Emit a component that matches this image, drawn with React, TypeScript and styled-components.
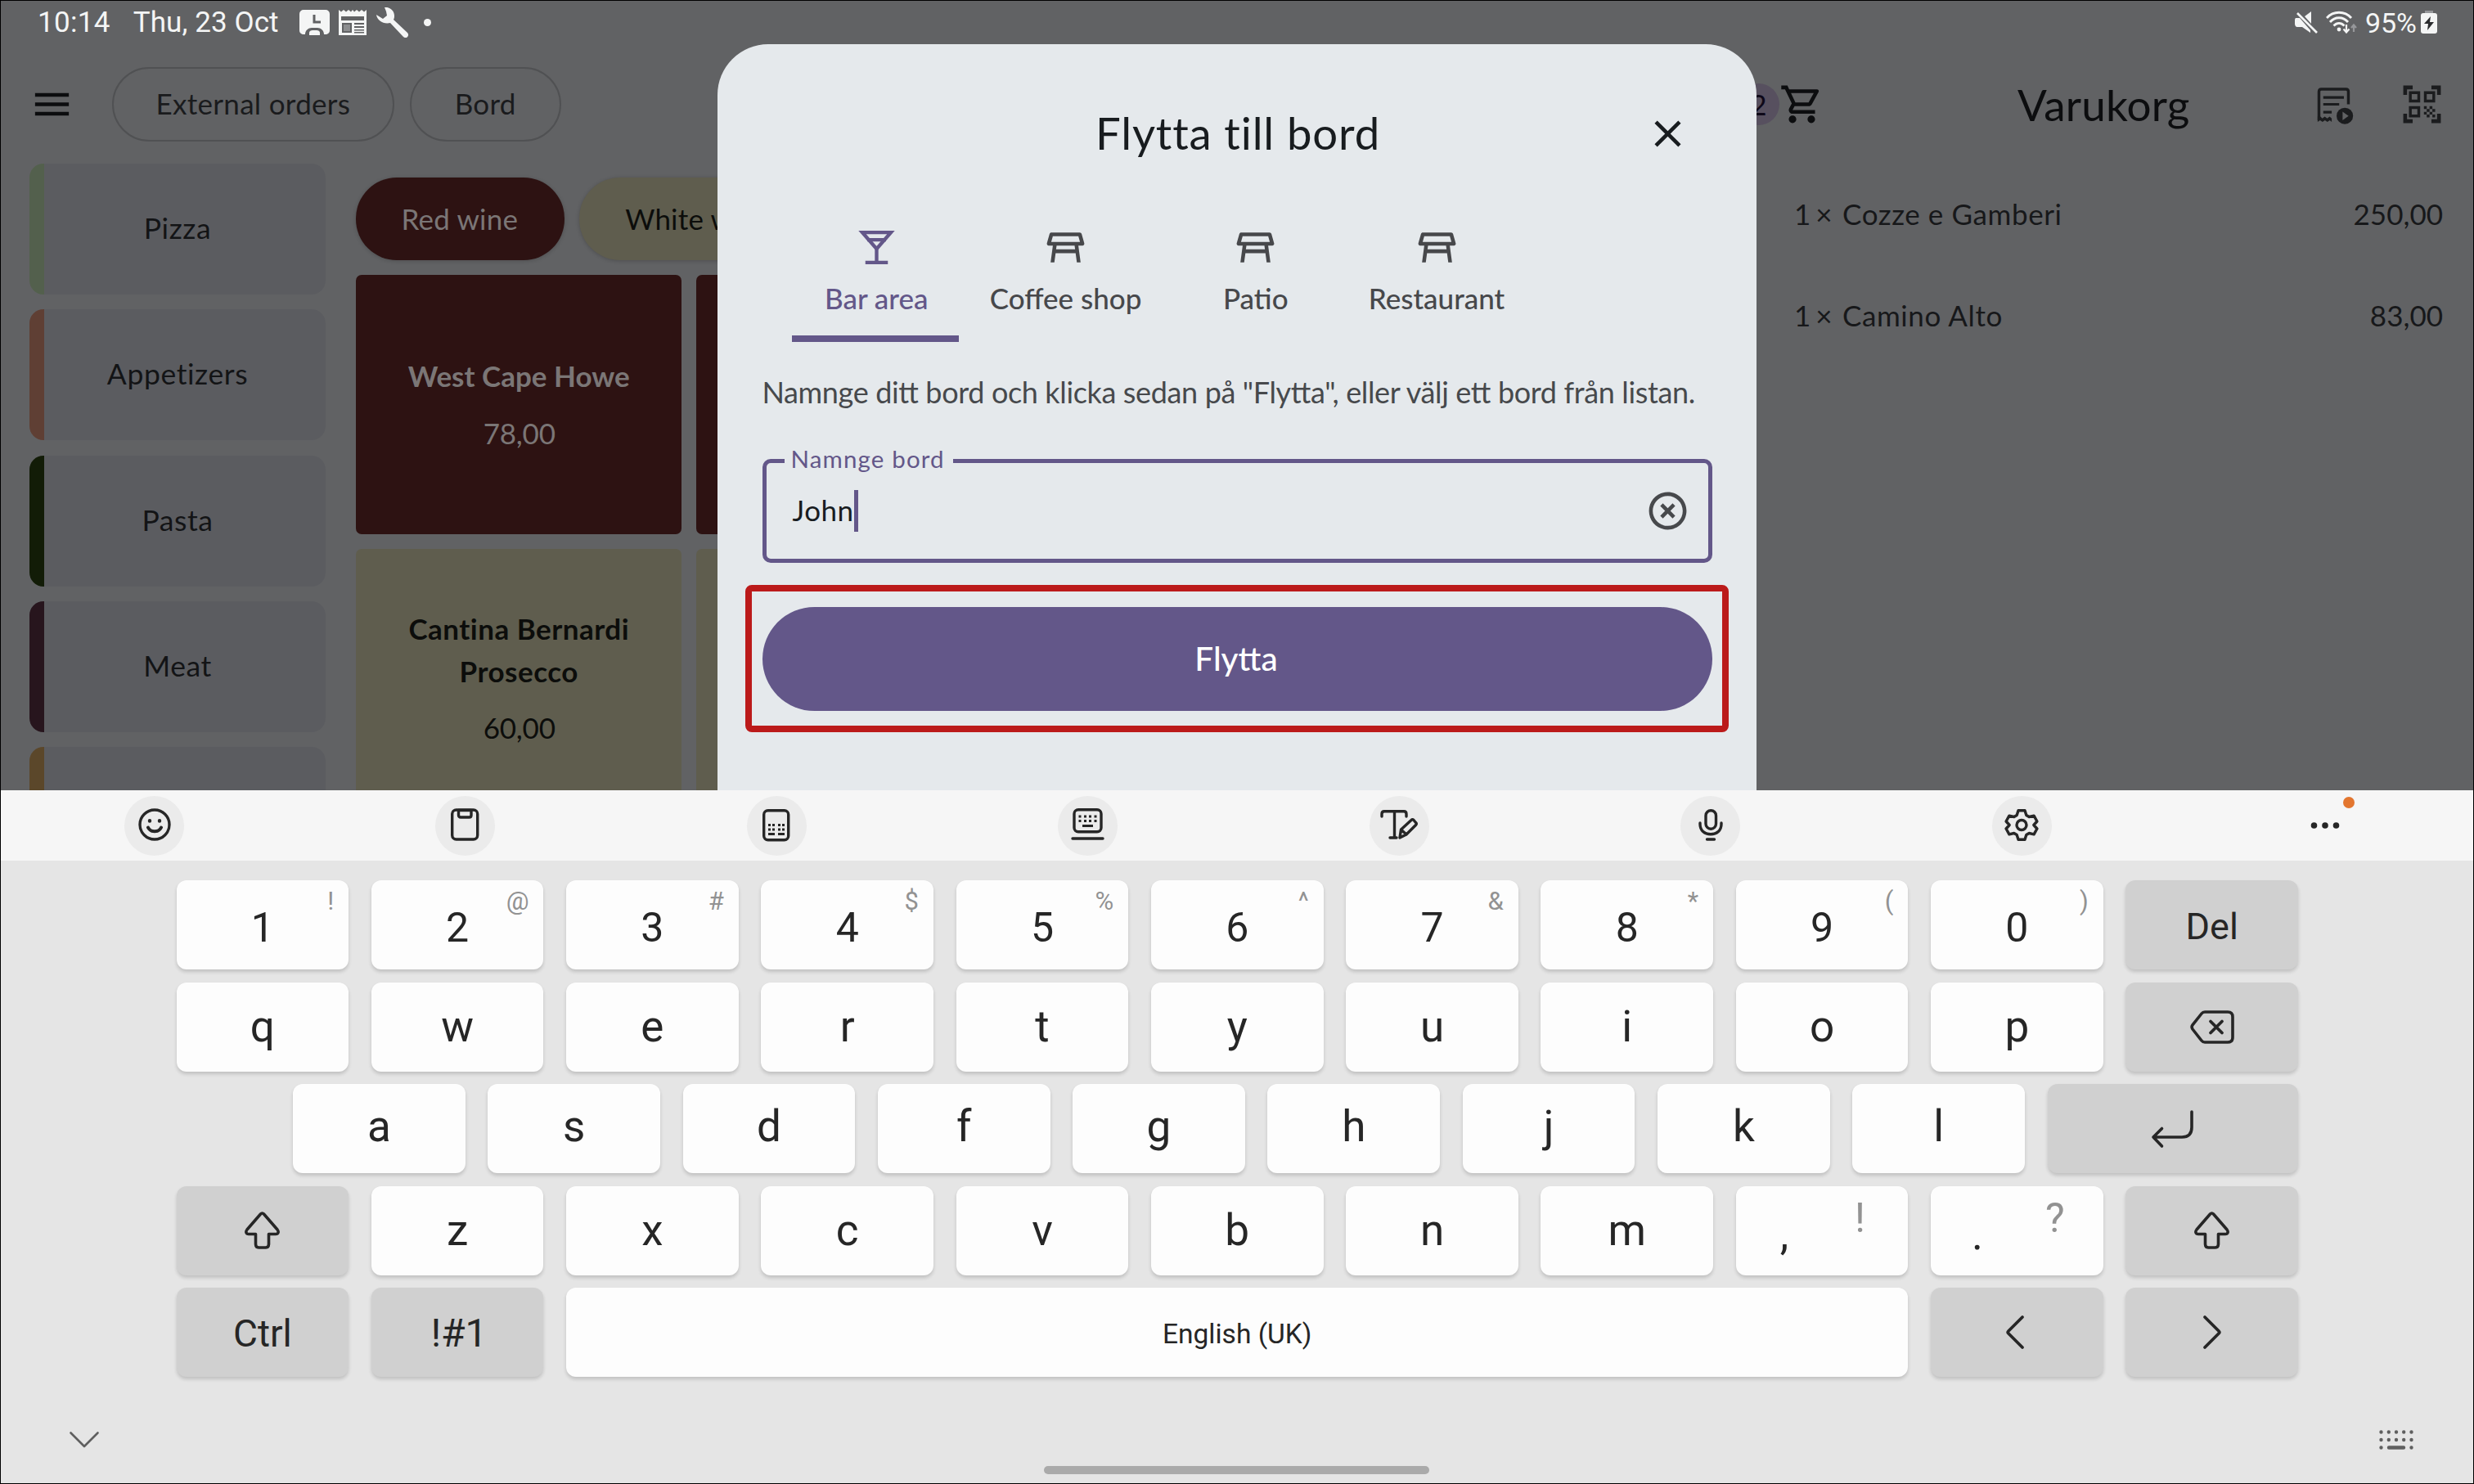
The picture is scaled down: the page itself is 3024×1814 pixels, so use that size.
import React from 'react';
import styled, {createGlobalStyle} from "styled-components";
import {
    MdClose,
    MdHighlightOff,
    MdMenu,
    MdOutlineShoppingCart,
    MdOutlineTableRestaurant,
    MdQrCodeScanner
} from "react-icons/md";

type KeyData = {
    label?: React.ReactNode
    hint?: string
    gray?: boolean
    grow?: boolean
    size?: number
    shift?: number
    punct?: number
}

const categories = [
    {title: 'Pizza', color: '#53604d'},
    {title: 'Appetizers', color: '#5f3f34'},
    {title: 'Pasta', color: '#121c07'},
    {title: 'Meat', color: '#27151d'},
    {title: '', color: '#5b472a'},
]

const cart = [
    {name: 'Cozze e Gamberi', price: '250,00'},
    {name: 'Camino Alto', price: '83,00'},
]

/* status bar icons */

const ContactIcon = () => (
    <svg width="37" height="31" viewBox="0 0 37 31">
        <path fill="#f4f5f5" d="M5 0h27a5 5 0 0 1 5 5v20a5 5 0 0 1-4 5h-3c0-5-4-8-8-8h-7c-4 0-8 3-8 8H4a5 5 0 0 1-4-5V5a5 5 0 0 1 5-5z"/>
        <path fill="none" stroke="#616264" strokeWidth="3" d="M18 6v9h8"/>
        <path fill="#f4f5f5" d="M12 31v-3c0-2 2-3 4-3h5c2 0 4 1 4 3v3z"/>
    </svg>
)

const NewsIcon = () => (
    <svg width="34" height="31" viewBox="0 0 34 31">
        <path fill="#f4f5f5" d="M0 0l3 2.500 3-2.500 3 2.500 3-2.500 3 2.500 2-2.500 2 2.500 3-2.500 3 2.500 3-2.500 3 2.500 3-2.500v31H0z"/>
        <path fill="#616264" d="M3 8h28v5H3zM4 16h12v12H4zM19 16h12v2H19zM19 20h12v2H19zM19 24h12v1.500H19zM19 27h12v1.500H19z"/>
        <path fill="#8d8e90" d="M6 18h8v8H6z"/>
    </svg>
)

const WrenchIcon = () => (
    <svg width="40" height="37" viewBox="0 0 40 37">
        <path fill="#f4f5f5" d="M10 0c6-1 12 4 12 10 0 2 0 3-1 5l17 16c2 2 1 5-1 6-2 0-3 0-4-1L17 19c-8 2-16-3-17-10l8 5 5-4-1-5z"/>
    </svg>
)

const MuteIcon = () => (
    <svg width="28" height="27" viewBox="0 0 28 27">
        <path fill="#f4f5f5" d="M1 8h5l13 15v3L9 19H3c-2 0-3-2-3-4v-4c0-1 0-2 1-3zM12 6l8-6v15z"/>
        <path stroke="#f4f5f5" strokeWidth="2.600" d="M3 2l24 24"/>
    </svg>
)

const WifiIcon = () => (
    <svg width="38" height="28" viewBox="0 0 38 28">
        <g fill="none" stroke="#f4f5f5" strokeWidth="2.800">
            <path d="M1 9c8-9 22-9 30 0"/>
            <path d="M5 14c6-7 16-7 22 0"/>
            <path d="M9.500 18.500c4-4 9-4 13 0"/>
            <path strokeWidth="2.200" d="M25 17v9M21.500 22.500l3.500 4 3.500-4"/>
        </g>
        <circle cx="16" cy="23" r="2.400" fill="#f4f5f5"/>
        <path fill="none" stroke="#96979a" strokeWidth="2.200" d="M34 26v-8M31 21l3-3.500 3 3.500"/>
    </svg>
)

const BatteryIcon = () => (
    <svg width="20" height="28" viewBox="0 0 20 28">
        <path fill="#96979a" d="M5 0h10v4H5z"/>
        <rect y="3" width="20" height="25" rx="3" fill="#f4f5f5"/>
        <path fill="#2b2c2e" d="M12 7l-8 9h5l-1 8 8-10h-5z"/>
    </svg>
)

/* app icons */

const ReceiptIcon = () => (
    <svg width="55" height="55" viewBox="0 0 24 24" fill="none" stroke="#1b1c1e">
        <path strokeWidth="1.500" d="M19.400 12V5.200c0-.8-.5-1.300-1.300-1.300H5c-.8 0-1.300.5-1.300 1.300V20.500"/>
        <path strokeWidth="1.400" d="M6 8.300h11M6 12h8.500M6 16.200h4.500"/>
        <path fill="#1b1c1e" stroke="none" d="M3 18.500h1.500l1 1 1.300-1 1.300 1 1.300-1 1.100 1v1.900l-1-.9-1.300.9-1.300-.9-1.300.9-1.300-.9-1.300.9z"/>
        <circle cx="17.500" cy="18.200" r="4.400" fill="#1b1c1e" stroke="none"/>
        <path fill="#616264" stroke="none" d="M16.300 15.900l3.200 2.300-3.200 2.300z"/>
    </svg>
)

const MartiniIcon = () => (
    <svg width="55" height="55" viewBox="0 0 24 24" fill="none" stroke="#635789" strokeWidth="1.900">
        <path d="M4.400 4h15.200L12 12.700z"/>
        <path d="M7 7.900h10M12 12.700V20M6 20h12"/>
    </svg>
)

/* keyboard icons */

const StrokeSvg = styled.svg`
    display: block;
    fill: none;
    stroke: #262626;
    stroke-width: 3.4px;
    stroke-linecap: round;
    stroke-linejoin: round;
    overflow: visible;
`

const SmileIcon = () => (
    <StrokeSvg width="40" height="40" viewBox="0 0 40 40">
        <circle cx="20" cy="20" r="18"/>
        <path strokeWidth="4" d="M12 23.500c1.500 3.200 4.500 4.700 8 4.700s6.500-1.500 8-4.700"/>
        <path strokeWidth="4.400" d="M14 15.300v.2M26 15.300v.2"/>
    </StrokeSvg>
)

const ClipboardIcon = () => (
    <StrokeSvg width="35" height="40" viewBox="0 0 35 40">
        <rect x="1.700" y="2" width="31" height="36" rx="5"/>
        <path d="M9.500 2.500v6c0 1.500 1 2.500 2.500 2.500h10.500c1.500 0 2.500-1 2.500-2.500v-6z"/>
    </StrokeSvg>
)

const CalculatorIcon = () => (
    <StrokeSvg width="34" height="39" viewBox="0 0 34 39">
        <rect x="1.700" y="1.700" width="30" height="36" rx="5"/>
        <path strokeWidth="3" strokeLinecap="butt" d="M7 19.500h3M12 19.500h3M19 19.500h3M24 19.500h3M7 25h3M12 25h3M19 25h3M24 25h3M7 30.500h8M19 30.500h8"/>
    </StrokeSvg>
)

const KeyboardIcon = () => (
    <StrokeSvg width="41" height="40" viewBox="0 0 41 40">
        <rect x="4" y="1.700" width="33" height="27" rx="5"/>
        <path strokeWidth="3" strokeLinecap="butt" d="M9.500 10h3M16 10h3M22 10h3M28.500 10h3M9.500 15.500h3M16 15.500h3M22 15.500h3M28.500 15.500h3M14 21.500h13"/>
        <path d="M2 37h37"/>
    </StrokeSvg>
)

const TextEditIcon = () => (
    <StrokeSvg width="46" height="36" viewBox="0 0 46 36">
        <path d="M2 8V5c0-2 1-3.300 3-3.300h24c2 0 3 1.300 3 3.300v3M17.500 2v31M12 34h8"/>
        <path d="M24 34l1.500-10L38 12.500c1-1 2-1 3 0l2.500 3c1 1 1 2 0 3L32 30zM26 24.500l6 5.500"/>
    </StrokeSvg>
)

const MicIcon = () => (
    <StrokeSvg width="30" height="39" viewBox="0 0 30 39">
        <rect x="9" y="1.700" width="12.500" height="22.500" rx="6.200"/>
        <path d="M2 17v1.500c0 7.500 5.500 12.300 13 12.300s13-4.800 13-12.300V17M10.500 37h9"/>
    </StrokeSvg>
)

const GearIcon = () => (
    <StrokeSvg width="40" height="39" viewBox="0 0 40 39">
        <circle cx="20" cy="19.500" r="6"/>
        <path d="M16 1.800h8l1.800 5.700 3.400 2 5.900-1.300 3.800 6.800-4 4.500 4 4.500-3.800 6.800-5.900-1.300-3.400 2-1.800 5.700h-8l-1.800-5.700-3.400-2-5.900 1.300-3.800-6.800 4-4.500-4-4.500 3.800-6.800 5.900 1.300 3.400-2z"/>
    </StrokeSvg>
)

const DotsIcon = () => (
    <StrokeSvg width="36" height="8" viewBox="0 0 36 8">
        <path strokeWidth="7.600" d="M4.500 4v.01M18 4v.01M31.500 4v.01"/>
    </StrokeSvg>
)

const BackspaceIcon = () => (
    <StrokeSvg width="54" height="41" viewBox="0 0 54 41">
        <path strokeWidth="3.600" d="M18 2h28c4 0 6 2 6 6v25c0 4-2 6-6 6H18c-2 0-3-.7-4-2L3 23c-1.300-2-1.300-3.500 0-5.200L14 4c1-1.300 2-2 4-2z"/>
        <path strokeWidth="3.800" d="M25 13.500l14 14M39 13.500l-14 14"/>
    </StrokeSvg>
)

const EnterIcon = () => (
    <StrokeSvg width="51" height="46" viewBox="0 0 51 46">
        <path strokeWidth="3.600" d="M49 2v19c0 8-4 12-12 12H2M12.500 22.500L2 33l10.500 11"/>
    </StrokeSvg>
)

const ShiftIcon = () => (
    <StrokeSvg width="43" height="46" viewBox="0 0 43 46">
        <path strokeWidth="3.600" d="M19.500 3L3 22c-2 2.500-1.300 5.500 2 5.500h8.500V40c0 2.500 1.300 4 4 4h8c2.700 0 4-1.500 4-4V27.500H38c3.300 0 4-3 2-5.500L23.500 3c-1.300-1.400-2.700-1.400-4 0z"/>
    </StrokeSvg>
)

const LeftIcon = () => (
    <StrokeSvg width="26" height="41" viewBox="0 0 26 41">
        <path strokeWidth="3.800" d="M20 2L3 19c-1 1-1 2 0 3l17 17"/>
    </StrokeSvg>
)

const RightIcon = () => (
    <StrokeSvg width="22" height="41" viewBox="0 0 22 41">
        <path strokeWidth="3.800" d="M2 2l17 17c1 1 1 2 0 3L2 39"/>
    </StrokeSvg>
)

const HideIcon = () => (
    <StrokeSvg width="36" height="20" viewBox="0 0 36 20">
        <path stroke="#5f5f5f" strokeWidth="2.600" d="M1.500 1.500L18 18 34.500 1.500"/>
    </StrokeSvg>
)

const SwitchKeyboardIcon = () => (
    <StrokeSvg width="42" height="24" viewBox="0 0 42 24">
        <path stroke="#5f5f5f" strokeWidth="4.400" d="M2.500 2.500v.01M11.800 2.500v.01M21 2.500v.01M30.200 2.500v.01M39.500 2.500v.01M2.500 12v.01M11.800 12v.01M21 12v.01M30.200 12v.01M39.500 12v.01M2.500 21.500v.01M12 21.500h18M39.500 21.500v.01"/>
    </StrokeSvg>
)

const letters = (text: string, shift = 0): KeyData[] => text.split('').map(l => ({label: l, shift}))

const keyRows: { indent?: boolean, keys: KeyData[] }[] = [
    {
        keys: [
            ...'1234567890'.split('').map((d, i) => ({label: d, hint: '!@#$%^&*()'[i], size: 50, shift: 6})),
            {label: 'Del', gray: true, size: 45, shift: 3},
        ]
    },
    {keys: [...letters('qwertyuiop'), {label: <BackspaceIcon/>, gray: true}]},
    {indent: true, keys: [...letters('asdfghjkl', -4), {label: <EnterIcon/>, gray: true, grow: true}]},
    {
        keys: [
            {label: <ShiftIcon/>, gray: true},
            ...letters('zxcvbnm'),
            {label: ',', hint: '!', punct: 54, shift: 10},
            {label: '.', hint: '?', punct: 50, shift: 10},
            {label: <ShiftIcon/>, gray: true},
        ]
    },
    {
        keys: [
            {label: 'Ctrl', gray: true, size: 46, shift: 2},
            {label: <SymbolsLabel/>, gray: true, size: 48, shift: 2},
            {label: 'English (UK)', grow: true, size: 33.500, shift: 4},
            {label: <LeftIcon/>, gray: true},
            {label: <RightIcon/>, gray: true},
        ]
    },
]

function SymbolsLabel() {
    return <Symbols>!#1</Symbols>
}

const StatusBar = () => (
    <StyledStatusBar>
        <StatusText>10:14</StatusText>
        <StatusDate>Thu, 23 Oct</StatusDate>
        <StatusIcons>
            <ContactIcon/>
            <NewsIcon/>
            <WrenchIcon/>
        </StatusIcons>
        <StatusDot/>
        <StatusRight>
            <MuteIcon/>
            <WifiIcon/>
            <StatusPercent>95%</StatusPercent>
            <BatteryIcon/>
        </StatusRight>
    </StyledStatusBar>
)

const Catalog = () => (
    <StyledCatalog>
        <TopBar>
            <MdMenu size={55}/>
            <Pills>
                <OutlinePill>External orders</OutlinePill>
                <OutlinePill>Bord</OutlinePill>
            </Pills>
        </TopBar>
        <CatalogBody>
            <Categories>
                {categories.map(c => <Category key={c.color} $color={c.color}>{c.title}</Category>)}
            </Categories>
            <Products>
                <Filters>
                    <Filter $wine>Red wine</Filter>
                    <Filter>White wine</Filter>
                </Filters>
                <ProductGrid>
                    <Product $wine>
                        <ProductName>West Cape Howe</ProductName>
                        <Price>78,00</Price>
                    </Product>
                    <Product $wine/>
                    <Product>
                        <ProductName $wide>Cantina Bernardi Prosecco</ProductName>
                        <Price>60,00</Price>
                    </Product>
                    <Product/>
                </ProductGrid>
            </Products>
        </CatalogBody>
    </StyledCatalog>
)

const Cart = () => (
    <StyledCart>
        <CartHeader>
            <CartCount>2</CartCount>
            <MdOutlineShoppingCart size={55}/>
            <CartTitle>Varukorg</CartTitle>
            <CartActions>
                <ReceiptIcon/>
                <MdQrCodeScanner size={55} color="#1b1c1e"/>
            </CartActions>
        </CartHeader>
        <CartList>
            {cart.map(item => (
                <CartRow key={item.name}>
                    <Quantity>1 <Times>×</Times></Quantity>
                    <ItemName>{item.name}</ItemName>
                    <ItemPrice>{item.price}</ItemPrice>
                </CartRow>
            ))}
        </CartList>
    </StyledCart>
)

const MoveDialog = () => (
    <StyledDialog>
        <DialogHeader>
            <DialogTitle>Flytta till bord</DialogTitle>
            <CloseButton><MdClose size={55}/></CloseButton>
        </DialogHeader>
        <Tabs>
            <Tab $active $width={203.500}><MartiniIcon/><TabLabel>Bar area</TabLabel></Tab>
            <Tab $width={262}><MdOutlineTableRestaurant size={55}/><TabLabel>Coffee shop</TabLabel></Tab>
            <Tab $width={202.500}><MdOutlineTableRestaurant size={55}/><TabLabel>Patio</TabLabel></Tab>
            <Tab $width={240}><MdOutlineTableRestaurant size={55}/><TabLabel>Restaurant</TabLabel></Tab>
        </Tabs>
        <Description>Namnge ditt bord och klicka sedan på "Flytta", eller välj ett bord från listan.</Description>
        <Field>
            <FieldLabel>Namnge bord</FieldLabel>
            <FieldValue>John</FieldValue>
            <Caret/>
            <ClearButton><MdHighlightOff size={55}/></ClearButton>
        </Field>
        <SubmitWrapper>
            <SubmitButton>Flytta</SubmitButton>
        </SubmitWrapper>
    </StyledDialog>
)

const Keyboard = () => (
    <StyledKeyboard>
        <KeyboardToolbar>
            <Tool><SmileIcon/></Tool>
            <Tool><ClipboardIcon/></Tool>
            <Tool><CalculatorIcon/></Tool>
            <Tool><KeyboardIcon/></Tool>
            <Tool><TextEditIcon/></Tool>
            <Tool><MicIcon/></Tool>
            <Tool><GearIcon/></Tool>
            <MoreTool><DotsIcon/><NoticeDot/></MoreTool>
        </KeyboardToolbar>
        <Keys>
            {keyRows.map((row, i) => (
                <KeyRow key={i} $indent={row.indent}>
                    {row.keys.map((k, j) => (
                        <Key key={j} $gray={k.gray} $grow={k.grow} $size={k.size} $shift={k.shift} $punct={k.punct}>
                            {k.label}
                            {k.hint && <Hint $large={!!k.punct}>{k.hint}</Hint>}
                        </Key>
                    ))}
                </KeyRow>
            ))}
        </Keys>
        <NavBar>
            <HideIcon/>
            <HomeHandle/>
            <SwitchKeyboardIcon/>
        </NavBar>
    </StyledKeyboard>
)

const App = () => {
    return (
        <>
            <GlobalStyle/>
            <Screen>
                <AppArea>
                    <StatusBar/>
                    <Panes>
                        <Catalog/>
                        <Cart/>
                    </Panes>
                    <MoveDialog/>
                </AppArea>
                <Keyboard/>
            </Screen>
        </>
    );
};

export default App;

const GlobalStyle = createGlobalStyle`
    * {
        box-sizing: border-box;
    }

    body {
        margin: 0;
        background: #e5e5e5;
    }

    svg {
        display: block;
        flex-shrink: 0;
    }
`

const Screen = styled.div`
    position: relative;
    display: flex;
    flex-direction: column;
    width: 3024px;
    height: 1814px;
    overflow: hidden;
    font-family: Lato, sans-serif;
    font-size: 35px;

    &::after {
        content: "";
        position: absolute;
        inset: 0;
        border: 1px solid #000;
    }
`

const AppArea = styled.div`
    position: relative;
    display: flex;
    flex-direction: column;
    height: 966px;
    overflow: hidden;
    background: #616264;
    color: #131416;
`

/* status bar */

const StyledStatusBar = styled.div`
    display: flex;
    align-items: center;
    height: 54px;
    padding: 0 45px 0 46px;
    font: 35px/56px Roboto, sans-serif;
    color: #f4f5f5;
`

const StatusText = styled.span`
    padding-top: 1px;
    letter-spacing: 0.3px;
`

const StatusDate = styled.span`
    padding-top: 1px;
    margin-left: 28px;
    letter-spacing: 0.1px;
`

const StatusIcons = styled.div`
    display: flex;
    align-items: center;
    gap: 11.5px;
    margin-left: 25px;
`

const StatusDot = styled.span`
    width: 9px;
    height: 9px;
    margin-left: 18px;
    border-radius: 50%;
    background: #f4f5f5;
`

const StatusRight = styled.div`
    display: flex;
    align-items: center;
    gap: 10px;
    margin-left: auto;
`

const StatusPercent = styled.span`
    margin-right: -5px;
    padding-top: 1px;
    font-size: 34px;
`

/* catalog */

const Panes = styled.div`
    display: flex;
    flex: 1;
    min-height: 0;
`

const StyledCatalog = styled.div`
    width: 2124px;
    padding-left: 36px;
    overflow: hidden;
`

const TopBar = styled.div`
    display: flex;
    align-items: center;
    gap: 45.500px;
    height: 146px;
    color: #0c0d0f;
`

const Pills = styled.div`
    display: flex;
    gap: 18.5px;
`

const OutlinePill = styled.div`
    min-width: 185px;
    height: 91px;
    padding: 0 52px;
    border: 2.500px solid #505153;
    border-radius: 46px;
    line-height: 85px;
    letter-spacing: 0.3px;
    text-align: center;
    color: #1a1b1d;
`

const CatalogBody = styled.div`
    display: flex;
    gap: 36.5px;
`

const Categories = styled.div`
    display: flex;
    flex-direction: column;
    gap: 18.300px;
    width: 362px;
`

const Category = styled.div<{ $color: string }>`
    height: 160px;
    border-radius: 17px;
    background: linear-gradient(to right, ${p => p.$color} 18px, #5b5c60 18px);
    font-size: 35.500px;
    line-height: 158px;
    letter-spacing: 0.600px;
    text-align: center;
`

const Products = styled.div`
    flex: 1;
    padding-top: 17px;
`

const Filters = styled.div`
    display: flex;
    gap: 18px;
`

const Filter = styled.div<{ $wine?: boolean }>`
    height: 100.500px;
    padding: 0 57px 0 56px;
    border-radius: 50px;
    background: ${p => p.$wine ? '#2d1212' : '#5f5d4e'};
    box-shadow: 0 1px 5px rgba(0, 0, 0, 0.2);
    color: ${p => p.$wine ? '#7b7676' : '#0c0d0b'};
    line-height: 101px;
    letter-spacing: 0.200px;
`

const ProductGrid = styled.div`
    display: grid;
    grid-template-columns: 398.500px 398.500px;
    gap: 18px 18px;
    margin-top: 18px;
`

const Product = styled.div<{ $wine?: boolean }>`
    display: flex;
    flex-direction: column;
    align-items: center;
    justify-content: center;
    gap: 18px;
    height: 317px;
    padding: 1px 39px 0 40px;
    border-radius: 7px;
    background: ${p => p.$wine ? '#2d1212' : '#5f5d4e'};
    color: ${p => p.$wine ? '#7b7676' : '#0c0d0b'};
    line-height: 51.500px;
    text-align: center;
`

const ProductName = styled.div<{ $wide?: boolean }>`
    font-weight: 700;
    letter-spacing: ${p => p.$wide ? 0.5 : 0}px;
`

const Price = styled.div`
    padding-left: 1px;
    letter-spacing: -0.200px;
`

/* cart */

const StyledCart = styled.div`
    flex: 1;
    padding-right: 36px;
`

const CartHeader = styled(TopBar)`
    gap: 0;
`

const CartCount = styled.div`
    width: 51px;
    height: 51px;
    border-radius: 50%;
    background: #57505f;
    color: #0e0818;
    line-height: 51px;
    text-align: center;
`

const CartTitle = styled.div`
    margin-left: 236px;
    font-size: 53px;
    letter-spacing: 0.200px;
`

const CartActions = styled.div`
    display: flex;
    gap: 52px;
    margin-left: auto;
`

const CartList = styled.div`
    margin-top: -1px;
    padding-left: 69px;
`

const CartRow = styled.div`
    display: flex;
    align-items: center;
    height: 124px;
    padding-right: 2px;
    color: #17181a;
`

const Quantity = styled.div`
    width: 59px;
    white-space: nowrap;
`

const Times = styled.span`
    margin-left: -3px;
`

const ItemName = styled.div`
    letter-spacing: 0.600px;
`

const ItemPrice = styled.div`
    margin-left: auto;
`

/* dialog */

const StyledDialog = styled.div`
    position: absolute;
    top: 54px;
    left: 877px;
    width: 1270px;
    height: 980px;
    padding: 0 54.500px;
    border-radius: 62px;
    background: #e5e9ec;
    color: #181c1f;
`

const DialogHeader = styled.div`
    display: grid;
    grid-template-columns: 1fr auto 1fr;
    align-items: center;
    height: 219px;
`

const DialogTitle = styled.div`
    grid-column: 2;
    padding: 0 0 3px 2px;
    font-size: 54.500px;
    letter-spacing: 0.850px;
`

const CloseButton = styled.div`
    justify-self: end;
    margin-right: 27px;
`

const Tabs = styled.div`
    display: flex;
    padding-left: 36.500px;
`

const Tab = styled.div<{ $active?: boolean, $width: number }>`
    display: flex;
    flex-direction: column;
    align-items: center;
    gap: 13px;
    width: ${p => p.$width}px;
    height: 144.500px;
    padding-top: 2px;
    padding-left: ${p => p.$active ? 3 : 0}px;
    border-bottom: 8px solid ${p => p.$active ? '#635789' : 'transparent'};
    color: ${p => p.$active ? '#635789' : '#47484b'};
`

const TabLabel = styled.div`
    font-weight: 500;
    line-height: 42px;
    white-space: nowrap;
`

/* negative tracking turns ligatures off, so they are asked for again */
const Description = styled.div`
    margin-top: 35px;
    font-size: 36px;
    line-height: 52px;
    letter-spacing: -0.360px;
    font-feature-settings: "liga" 1;
    color: #47494c;
    white-space: nowrap;
`

const Field = styled.div`
    position: relative;
    display: flex;
    align-items: center;
    height: 127px;
    margin-top: 56px;
    padding: 0 22px 0 32px;
    border: 5px solid #635789;
    border-radius: 10px;
`

const FieldLabel = styled.div`
    position: absolute;
    top: -23px;
    left: 22px;
    padding: 0 10px 0 8px;
    background: #e5e9ec;
    color: #635789;
    font-size: 29.500px;
    line-height: 36px;
    letter-spacing: 1.150px;
`

const FieldValue = styled.div`
    padding-bottom: 2px;
    letter-spacing: 0.500px;
`

const Caret = styled.span`
    width: 5px;
    height: 51px;
    background: #635789;
`

const ClearButton = styled.div`
    margin-left: auto;
    color: #47494c;
`

const SubmitWrapper = styled.div`
    position: relative;
    margin-top: 54.500px;

    &::after {
        content: "";
        position: absolute;
        inset: -27px -20.500px -26px;
        border: 8px solid #bb1a1a;
        border-radius: 8px;
    }
`

const SubmitButton = styled.div`
    height: 127px;
    padding-right: 2px;
    border-radius: 64px;
    background: #635789;
    color: #fff;
    font-size: 40.500px;
    font-weight: 500;
    line-height: 126px;
    text-align: center;
`

/* keyboard */

const StyledKeyboard = styled.div`
    display: flex;
    flex-direction: column;
    flex: 1;
    background: #e5e5e5;
    color: #262626;
    font-family: Roboto, sans-serif;
`

const KeyboardToolbar = styled.div`
    display: flex;
    align-items: center;
    justify-content: space-between;
    height: 86px;
    padding: 0 136px 0 152px;
    background: #f6f6f6;
`

const Tool = styled.div`
    display: flex;
    align-items: center;
    justify-content: center;
    width: 73px;
    height: 73px;
    padding-bottom: 2px;
    border-radius: 50%;
    background: #ebebeb;
`

const MoreTool = styled(Tool)`
    position: relative;
    padding: 0 18px 0 0;
    background: none;
`

const NoticeDot = styled.span`
    position: absolute;
    top: 1px;
    right: 10px;
    width: 14px;
    height: 14px;
    border-radius: 50%;
    background: #e3762f;
`

const Keys = styled.div`
    display: flex;
    flex-direction: column;
    gap: 15.500px;
    width: 2809px;
    padding: 24px 0 0 215.500px;
`

const KeyRow = styled.div<{ $indent?: boolean }>`
    display: flex;
    gap: 27.600px;
    height: 109px;
    padding-left: ${p => p.$indent ? '142.5px' : 0};
`

const Key = styled.div<{ $gray?: boolean, $grow?: boolean, $size?: number, $shift?: number, $punct?: number }>`
    position: relative;
    display: flex;
    flex: ${p => p.$grow ? '1' : '0 0 210.7px'};
    align-items: center;
    justify-content: ${p => p.$punct ? 'flex-start' : 'center'};
    padding-top: ${p => Math.max(p.$shift || 0, 0)}px;
    padding-bottom: ${p => Math.max(-(p.$shift || 0), 0)}px;
    padding-left: ${p => p.$punct || 0}px;
    border-radius: 12px;
    background: ${p => p.$gray ? '#d0d0d0' : '#fdfdfd'};
    box-shadow: 0 3px 4px rgba(0, 0, 0, 0.16);
    font-size: ${p => p.$size || 53}px;
    line-height: 1;
`

const Symbols = styled.span`
    padding-left: 4px;
`

const Hint = styled.span<{ $large?: boolean }>`
    position: absolute;
    top: ${p => p.$large ? 10 : 8}px;
    right: ${p => p.$large ? 9 : 18}px;
    width: ${p => p.$large ? '100px' : 'auto'};
    color: #929292;
    font-size: ${p => p.$large ? 50 : 31}px;
    line-height: ${p => p.$large ? 58 : 36}px;
    text-align: center;
`

const NavBar = styled.div`
    display: flex;
    align-items: center;
    justify-content: space-between;
    flex: 1;
    padding: 22px 74px 0 85px;
`

const HomeHandle = styled.div`
    align-self: flex-end;
    width: 471px;
    height: 10px;
    margin: 0 7px 12px 0;
    border-radius: 5px;
    background: #aaa;
`
